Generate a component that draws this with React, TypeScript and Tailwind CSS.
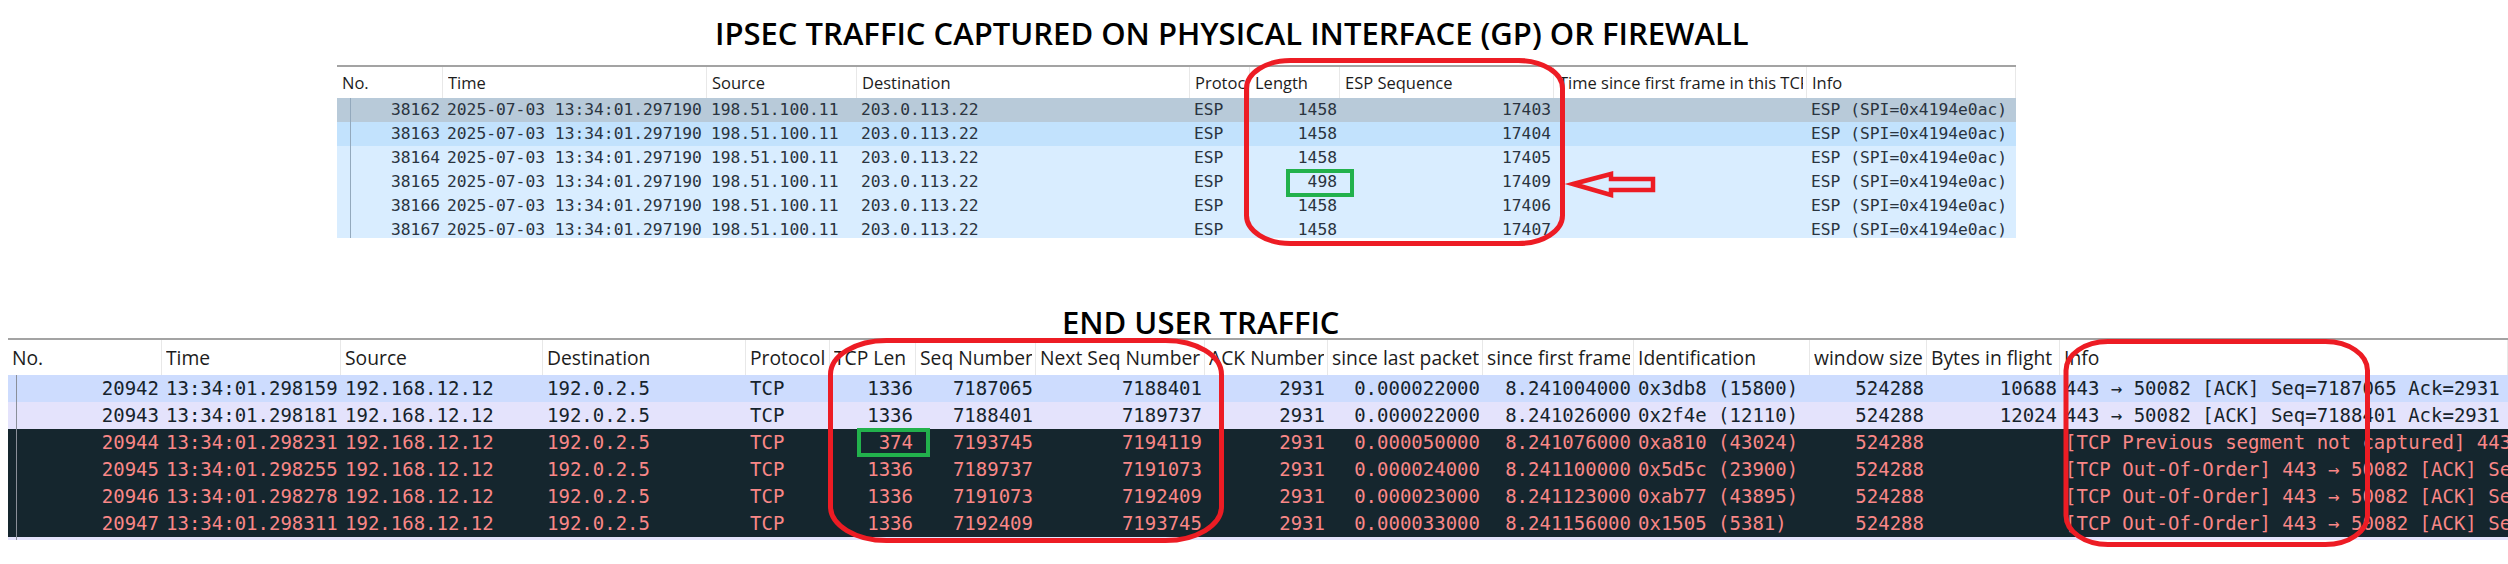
import React from "react";

const mono = "font-['DejaVu_Sans_Mono',monospace]";
const sans = "font-['Open_Sans',sans-serif]";

const ipsecHeaders = ["No.", "Time", "Source", "Destination", "Protocol", "Length", "ESP Sequence", "Time since first frame in this TCP stream", "Info"];
const ipsecRight = [0, 5, 6];
const ipsecRows = [
  ["38162", "17403", "1458", "bg-[#b8cad9]"],
  ["38163", "17404", "1458", "bg-[#c2e2fd]"],
  ["38164", "17405", "1458", "bg-[#d9edff]"],
  ["38165", "17409", "498", "bg-[#d9edff]"],
  ["38166", "17406", "1458", "bg-[#d9edff]"],
  ["38167", "17407", "1458", "bg-[#d9edff]"],
];

const userHeaders = ["No.", "Time", "Source", "Destination", "Protocol", "TCP Len", "Seq Number", "Next Seq Number", "ACK Number", "since last packet", "since first frame", "Identification", "window size", "Bytes in flight", "Info"];
const userRight = [0, 5, 6, 7, 8, 9, 10, 12, 13];
const userRows = [
  ["20942", "13:34:01.298159", "1336", "7187065", "7188401", "0.000022000", "8.241004000", "0x3db8 (15800)", "10688", "443 → 50082 [ACK] Seq=7187065 Ack=2931 Win=524288 Len=1336", "bg-[#cddcfe] text-[#16232c]"],
  ["20943", "13:34:01.298181", "1336", "7188401", "7189737", "0.000022000", "8.241026000", "0x2f4e (12110)", "12024", "443 → 50082 [ACK] Seq=7188401 Ack=2931 Win=524288 Len=1336", "bg-[#e4e3fc] text-[#16232c]"],
  ["20944", "13:34:01.298231", "374", "7193745", "7194119", "0.000050000", "8.241076000", "0xa810 (43024)", "", "[TCP Previous segment not captured] 443 → 50082 [ACK] Seq=7193745", "bg-[#15262e] text-[#f98787]"],
  ["20945", "13:34:01.298255", "1336", "7189737", "7191073", "0.000024000", "8.241100000", "0x5d5c (23900)", "", "[TCP Out-Of-Order] 443 → 50082 [ACK] Seq=7189737", "bg-[#15262e] text-[#f98787]"],
  ["20946", "13:34:01.298278", "1336", "7191073", "7192409", "0.000023000", "8.241123000", "0xab77 (43895)", "", "[TCP Out-Of-Order] 443 → 50082 [ACK] Seq=7191073", "bg-[#15262e] text-[#f98787]"],
  ["20947", "13:34:01.298311", "1336", "7192409", "7193745", "0.000033000", "8.241156000", "0x1505 (5381)", "", "[TCP Out-Of-Order] 443 → 50082 [ACK] Seq=7192409", "bg-[#15262e] text-[#f98787]"],
];

const IpsecTable = () => (
  <div className="relative ml-[337px] w-[1679px] h-[173px] overflow-hidden border-t-2 border-[#a3a3a3]">
    <div className="grid grid-cols-[106px_264px_150px_333px_60px_90px_214px_253px_209px] h-[31px] bg-white">
      {ipsecHeaders.map(h => (
        <div key={h} className="pl-[5px] pr-[3px] border-r border-[#e8e8e8] min-w-0">
          <div className={`${sans} text-[16.5px] leading-[31px] overflow-hidden whitespace-nowrap text-[#1c1c1c]`}>{h}</div>
        </div>
      ))}
    </div>
    {ipsecRows.map(r => {
      const cells = [r[0], "2025-07-03 13:34:01.297190", "198.51.100.11", "203.0.113.22", "ESP", r[2], r[1], "", "ESP (SPI=0x4194e0ac)"];
      return (
        <div key={r[0]} className={`grid grid-cols-[106px_264px_150px_333px_60px_90px_214px_253px_209px] h-[24px] ${r[3]} text-[#2a3440]`}>
          {cells.map((c, i) => (
            <div key={i} className={`${mono} text-[16.3px] leading-[24px] overflow-hidden whitespace-nowrap ${ipsecRight.includes(i) ? "text-right pr-[3px]" : "pl-[4px]"}`}>{c}</div>
          ))}
        </div>
      );
    })}
    <div className="absolute left-[13px] top-[31px] bottom-0 w-px bg-[#93a9bd]" />
  </div>
);

const UserTable = () => (
  <div className="relative ml-[8px] w-[2500px] h-[202px] overflow-hidden border-t-2 border-[#a3a3a3] bg-[#e4e3fc]">
    <div className="grid grid-cols-[154px_179px_202px_203px_84px_86px_120px_169px_123px_155px_151px_176px_117px_133px_448px] h-[35px] bg-white">
      {userHeaders.map(h => (
        <div key={h} className="pl-[4px] pr-[3px] border-r border-[#e8e8e8] min-w-0">
          <div className={`${sans} text-[19.3px] leading-[35px] overflow-hidden whitespace-nowrap text-[#1c1c1c]`}>{h}</div>
        </div>
      ))}
    </div>
    {userRows.map(r => {
      const cells = [r[0], r[1], "192.168.12.12", "192.0.2.5", "TCP", r[2], r[3], r[4], "2931", r[5], r[6], r[7], "524288", r[8], r[9]];
      return (
        <div key={r[0]} className={`grid grid-cols-[154px_179px_202px_203px_84px_86px_120px_169px_123px_155px_151px_176px_117px_133px_448px] h-[27px] ${r[10]}`}>
          {cells.map((c, i) => (
            <div key={i} className={`${mono} text-[19px] leading-[27px] overflow-hidden whitespace-nowrap ${userRight.includes(i) ? "text-right pr-[3px]" : i === 14 ? "pl-[5px]" : "pl-[4px]"}`}>{c}</div>
          ))}
        </div>
      );
    })}
    <div className="absolute left-[8px] top-[35px] bottom-0 w-px bg-[#8a8f99]" />
  </div>
);

const Annotations = () => (
  <svg className="absolute left-0 top-0" width="2508" height="564" fill="none">
    <rect x="1246.5" y="60.5" width="316" height="183" rx="44" ry="28" stroke="#ed1c24" strokeWidth="5" />
    <rect x="1288" y="171" width="64" height="24" stroke="#22b14c" strokeWidth="4" />
    <path d="M1573 184 L1611 174 V179 H1653 V190 H1611 V195 Z" stroke="#ed1c24" strokeWidth="4.5" />
    <rect x="830.5" y="340.5" width="391" height="200" rx="56" ry="34" stroke="#ed1c24" strokeWidth="5" />
    <rect x="859" y="430" width="69" height="25" stroke="#22b14c" strokeWidth="4" />
    <rect x="2066" y="341.5" width="301.5" height="203" rx="42" ry="29" stroke="#ed1c24" strokeWidth="5" />
  </svg>
);

export default function App() {
  return (
    <div className="relative w-[2508px] h-[564px] overflow-hidden bg-white">
      <div className="h-[65px] pl-[715px] pt-[12px]">
        <h1 className={`${sans} text-[31px] leading-[42px] font-semibold text-black whitespace-nowrap`}>IPSEC TRAFFIC CAPTURED ON PHYSICAL INTERFACE (GP) OR FIREWALL</h1>
      </div>
      <IpsecTable />
      <div className="h-[100px] pl-[1062px] flex items-end">
        <h1 className={`${sans} text-[31px] leading-[42px] mb-[-5px] font-semibold text-black whitespace-nowrap`}>END USER TRAFFIC</h1>
      </div>
      <UserTable />
      <Annotations />
    </div>
  );
}
